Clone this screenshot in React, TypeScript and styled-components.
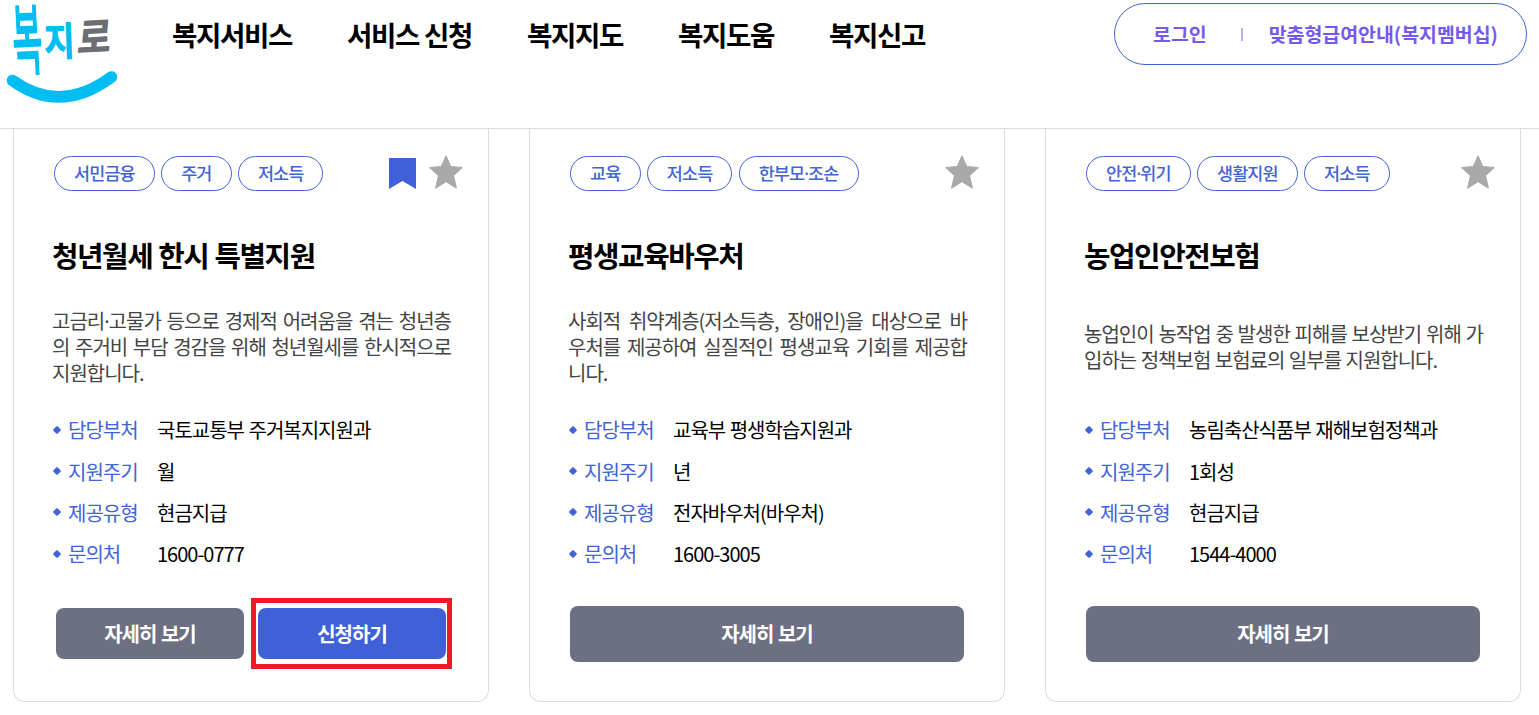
import React from 'react';
import styled, { createGlobalStyle } from 'styled-components';

interface Service {
  id: number;
  title: string;
  tags: string[];
  description: string;
  department: string;
  cycle: string;
  type: string;
  contact: string;
  bookmarked?: boolean;
  canApply?: boolean;
}

const MENUS = ['복지서비스', '서비스 신청', '복지지도', '복지도움', '복지신고'];

const SERVICES: Service[] = [
  {
    id: 1,
    title: '청년월세 한시 특별지원',
    tags: ['서민금융', '주거', '저소득'],
    description:
      '고금리·고물가 등으로 경제적 어려움을 겪는 청년층의 주거비 부담 경감을 위해 청년월세를 한시적으로 지원합니다.',
    department: '국토교통부 주거복지지원과',
    cycle: '월',
    type: '현금지급',
    contact: '1600-0777',
    bookmarked: true,
    canApply: true,
  },
  {
    id: 2,
    title: '평생교육바우처',
    tags: ['교육', '저소득', '한부모·조손'],
    description:
      '사회적 취약계층(저소득층, 장애인)을 대상으로 바우처를 제공하여 실질적인 평생교육 기회를 제공합니다.',
    department: '교육부 평생학습지원과',
    cycle: '년',
    type: '전자바우처(바우처)',
    contact: '1600-3005',
  },
  {
    id: 3,
    title: '농업인안전보험',
    tags: ['안전·위기', '생활지원', '저소득'],
    description:
      '농업인이 농작업 중 발생한 피해를 보상받기 위해 가입하는 정책보험 보험료의 일부를 지원합니다.',
    department: '농림축산식품부 재해보험정책과',
    cycle: '1회성',
    type: '현금지급',
    contact: '1544-4000',
  },
];

// 가운뎃점은 한글 폰트에서 폭이 넓어 라틴 폰트로 표시
const renderText = (text: string) =>
  text.split('·').map((part, index) => (
    <React.Fragment key={index}>
      {index > 0 && <MiddleDot>·</MiddleDot>}
      {part}
    </React.Fragment>
  ));

const Logo: React.FC = () => (
  <LogoSvg width="124" height="110" viewBox="0 0 124 110">
    <g fontSize="31" strokeLinejoin="round" strokeLinecap="round">
      <text
        transform="translate(14 69) rotate(-3) scale(1.04 2.48)"
        fontWeight="400"
        fill="#00bdf2"
        stroke="#00bdf2"
        strokeWidth="1.1"
      >
        복
      </text>
      <text
        transform="translate(45 56) rotate(-2) scale(1.05 1.25)"
        fontWeight="500"
        fill="#00bdf2"
        stroke="#00bdf2"
        strokeWidth="1.6"
      >
        지
      </text>
      <text
        transform="translate(77 53) rotate(-3) skewX(-8) scale(1.15 1.3)"
        fontWeight="500"
        fill="#6d6e71"
        stroke="#6d6e71"
        strokeWidth="1.4"
      >
        로
      </text>
    </g>
    <path
      d="M12.5 80.5Q60 115 111.5 77"
      fill="none"
      stroke="#00bdf2"
      strokeWidth="11.5"
      strokeLinecap="round"
    />
  </LogoSvg>
);

const BookmarkIcon: React.FC = () => (
  <svg width="27" height="34" viewBox="0 0 27 34">
    <path d="M0 3h27v31l-13.5-8L0 34z" fill="#3f61d7" />
  </svg>
);

const StarIcon: React.FC = () => (
  <svg width="34" height="34" viewBox="0 0 34 34">
    <path
      d="M17 1l4.6 10.5 11.4 1-8.6 8 2.9 12.5L17 26.6 6.7 33l2.9-12.5-8.6-8 11.4-1z"
      fill="#a9a9a9"
      stroke="#a9a9a9"
      strokeWidth="1.2"
      strokeLinejoin="round"
    />
  </svg>
);

const ServiceCard: React.FC<{ service: Service }> = ({ service }) => {
  const rows = [
    { label: '담당부처', value: service.department },
    { label: '지원주기', value: service.cycle },
    { label: '제공유형', value: service.type },
    { label: '문의처', value: service.contact },
  ];

  return (
    <Card>
      <CardTop>
        <Tags>
          {service.tags.map((tag) => (
            <Tag key={tag}>{renderText(tag)}</Tag>
          ))}
        </Tags>
        <Icons>
          {service.bookmarked && <BookmarkIcon />}
          <StarIcon />
        </Icons>
      </CardTop>
      <CardTitle>{service.title}</CardTitle>
      <DescriptionBox>
        <Description>{renderText(service.description)}</Description>
      </DescriptionBox>
      <InfoList>
        {rows.map((row) => (
          <InfoRow key={row.label}>
            <InfoLabel>{row.label}</InfoLabel>
            <InfoValue>{row.value}</InfoValue>
          </InfoRow>
        ))}
      </InfoList>
      <Actions $split={service.canApply}>
        <Button>자세히 보기</Button>
        {service.canApply && (
          <Highlight>
            <Button $primary>신청하기</Button>
          </Highlight>
        )}
      </Actions>
    </Card>
  );
};

const App: React.FC = () => (
  <>
    <GlobalStyle />
    <Header>
      <Logo />
      <Nav>
        {MENUS.map((menu) => (
          <NavItem key={menu}>{menu}</NavItem>
        ))}
      </Nav>
      <UserMenu>
        <UserLink>로그인</UserLink>
        <Divider />
        <UserLink>맞춤형급여안내(복지멤버십)</UserLink>
      </UserMenu>
    </Header>
    <CardList>
      {SERVICES.map((service) => (
        <ServiceCard key={service.id} service={service} />
      ))}
    </CardList>
  </>
);

const GlobalStyle = createGlobalStyle`
  * {
    box-sizing: border-box;
  }

  body {
    margin: 0;
    background: #fff;
    color: #000;
    font-family: 'Noto Sans CJK KR', sans-serif;
    overflow: hidden;
  }
`;

const MiddleDot = styled.span`
  font-family: 'Noto Sans', 'Noto Sans CJK KR', sans-serif;
  line-height: 1;
`;

const Header = styled.header`
  display: flex;
  align-items: flex-start;
  height: 129px;
  border-bottom: 1px solid #dcdcdc;
`;

const LogoSvg = styled.svg`
  flex-shrink: 0;
  overflow: visible;
`;

const Nav = styled.nav`
  display: flex;
  gap: 55px;
  margin-left: 48px;
  padding-top: 14px;
`;

const NavItem = styled.a`
  font-size: 27.6px;
  font-weight: 700;
  line-height: 40px;
  letter-spacing: -0.05em;
  white-space: nowrap;
`;

const UserMenu = styled.div`
  display: flex;
  align-items: center;
  width: 413px;
  height: 62px;
  margin: 3px 12px 0 auto;
  padding-left: 38px;
  border: 1px solid #4263d5;
  border-radius: 31px;
`;

const UserLink = styled.a`
  color: #7459ee;
  font-size: 19.45px;
  font-weight: 700;
  line-height: 28px;
  white-space: nowrap;
`;

const Divider = styled.span`
  width: 2px;
  height: 13px;
  margin: 0 26px 0 34px;
  background: #b9acf6;
`;

const CardList = styled.main`
  display: flex;
  gap: 40px;
  padding-left: 13px;
  word-spacing: 1px;
`;

const Card = styled.section`
  display: flex;
  flex-direction: column;
  flex-shrink: 0;
  width: 476px;
  height: 573px;
  padding: 26px 25px 0 38px;
  border: 1px solid #dcdcdc;
  border-top: 0;
  border-radius: 0 0 12px 12px;
`;

const CardTop = styled.div`
  display: flex;
  justify-content: space-between;
  height: 36px;
`;

const Tags = styled.div`
  display: flex;
  gap: 6.2px;
  padding: 1px 0 0 2px;
`;

const Tag = styled.span`
  height: 35px;
  padding: 0 19.1px;
  border: 1px solid #4263d5;
  border-radius: 18px;
  color: #4263d5;
  font-size: 17.45px;
  font-weight: 500;
  line-height: 32px;
  letter-spacing: -0.05em;
  white-space: nowrap;
`;

const Icons = styled.div`
  display: flex;
  align-items: center;
  gap: 13px;
  height: 34px;
`;

const CardTitle = styled.h3`
  margin: 43px 0 0;
  font-size: 28.8px;
  font-weight: 700;
  line-height: 42px;
  letter-spacing: -0.05em;
`;

const DescriptionBox = styled.div`
  display: flex;
  align-items: center;
  width: 399px;
  height: 78px;
  margin-top: 32px;
`;

const Description = styled.p`
  margin: 0;
  color: #444;
  font-size: 20px;
  line-height: 26px;
  letter-spacing: -1px;
  text-align: justify;
`;

const InfoList = styled.dl`
  margin: 23px 0 0;
`;

const InfoRow = styled.div`
  display: flex;
  align-items: center;
  height: 41.4px;
  font-size: 20px;
  letter-spacing: -1px;
`;

const InfoLabel = styled.dt`
  display: flex;
  align-items: center;
  width: 105px;
  color: #4263d5;

  &::before {
    content: '';
    width: 6px;
    height: 6px;
    margin: 0 8px 0 2px;
    background: #4263d5;
    border-radius: 1px;
    transform: rotate(45deg);
  }
`;

const InfoValue = styled.dd`
  margin: 0;
`;

const Actions = styled.div<{ $split?: boolean }>`
  display: flex;
  gap: 14px;
  width: ${({ $split }) => ($split ? '390px' : '394px')};
  height: ${({ $split }) => ($split ? '51px' : '56px')};
  margin: ${({ $split }) => ($split ? '33.4px 0 0 4px' : '31.4px 0 0 2px')};
`;

const Button = styled.button<{ $primary?: boolean }>`
  flex: 1;
  width: 100%;
  height: 100%;
  padding: 0;
  border: 0;
  border-radius: 8px;
  background: ${({ $primary }) => ($primary ? '#3f61d7' : '#6d6f82')};
  color: #fff;
  font-family: inherit;
  font-size: 20px;
  font-weight: 700;
  letter-spacing: -1px;
  word-spacing: 1px;
`;

const Highlight = styled.div`
  position: relative;
  flex: 1;

  &::after {
    content: '';
    position: absolute;
    top: -10px;
    right: -6px;
    bottom: -10px;
    left: -7px;
    border: 5px solid #ed1c24;
  }
`;

export default App;
